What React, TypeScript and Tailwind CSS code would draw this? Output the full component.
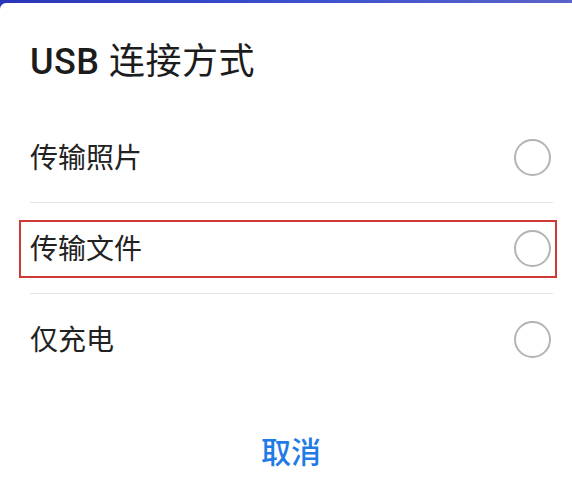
import React from 'react';

const options = [
  { label: '传输照片', highlighted: false },
  { label: '传输文件', highlighted: true },
  { label: '仅充电', highlighted: false },
];

const Radio: React.FC = () => (
  <span className="w-[37px] h-[37px] rounded-full border-2 border-[#b4b4b4] bg-white shrink-0" />
);

const App: React.FC = () => {
  return (
    <div
      className="w-[572px] h-[490px] bg-gradient-to-r from-[#2a35b8] via-[#3b4fcf] to-[#5a63c8] overflow-hidden"
      style={{ fontFamily: "Roboto, 'Noto Sans CJK SC', sans-serif" }}
    >
      <div className="mt-[3px] h-[487px] bg-white rounded-tl-[6px] flex flex-col">
        {/* Title */}
        <h1 className="pl-[30px] pt-[38px] text-[36px] leading-[42px] font-normal text-[#1c1c1c] tracking-[0.5px]">
          <span className="font-medium">USB</span> 连接方式
        </h1>

        {/* Options */}
        <div className="mt-[29px] flex flex-col">
          {options.map((opt, i) => (
            <div key={opt.label} className="flex flex-col">
              {i > 0 && <div className="ml-[30px] mr-[19px] h-px bg-[#e4e4e4]" />}
              <div className="relative h-[90px] flex items-center justify-between pl-[30px] pr-[21px]">
                <span className="pt-[3px] text-[28px] leading-none text-[#222]">{opt.label}</span>
                <Radio />
                {opt.highlighted && (
                  <div className="absolute left-[19px] right-[15px] top-[17px] h-[58px] border-2 border-[#cc3b35] pointer-events-none" />
                )}
              </div>
            </div>
          ))}
        </div>

        {/* Cancel */}
        <div className="mt-[54px] flex justify-center pl-[10px]">
          <span className="text-[30px] leading-none font-medium text-[#1f7be6]">取消</span>
        </div>
      </div>
    </div>
  );
};

export default App;
